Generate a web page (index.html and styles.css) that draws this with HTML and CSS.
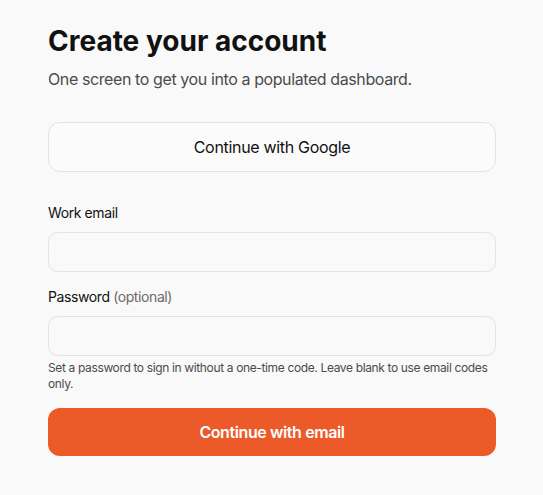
FILE: index.html
```html
<!DOCTYPE html>
<html lang="en">
<head>
<meta charset="utf-8">
<title>Create your account</title>
<link rel="stylesheet" href="styles.css">
</head>
<body>
<main class="page">
  <h1 class="title">Create your account</h1>
  <p class="subtitle">One screen to get you into a populated dashboard.</p>
  <button class="btn-google" type="button">Continue with Google</button>
  <form class="form">
    <label class="label" for="email">Work email</label>
    <input class="input" id="email" type="email">
    <label class="label label-pw" for="pw">Password <span class="optional">(optional)</span></label>
    <input class="input" id="pw" type="password">
    <p class="help">Set a password to sign in without a one-time code. Leave blank to use email codes only.</p>
    <button class="btn-primary" type="button">Continue with email</button>
  </form>
</main>
</body>
</html>
```

FILE: styles.css
```css
* { box-sizing: border-box; }
html, body { margin: 0; padding: 0; background: #f9f9f9; }
body { font-family: Inter, "Noto Sans", sans-serif; color: #111; letter-spacing: -0.025em; }
.page { width: 448px; margin: 0 0 0 48px; padding-top: 24px; display: flex; flex-direction: column; }
.title { margin: 0; font-size: 28px; line-height: 34px; font-weight: 700; letter-spacing: 0; color: #111; }
.subtitle { margin: 9px 0 0; font-size: 16px; line-height: 24px; color: #4b4b4b; }
.btn-google { margin-top: 31px; height: 50px; width: 100%; border: 1px solid #e3e3e3; border-radius: 12px; background: #fbfbfb; font-family: inherit; letter-spacing: -0.02em; font-size: 16px; font-weight: 400; color: #111; }
.form { display: flex; flex-direction: column; margin-top: 31px; }
.label { font-size: 14px; line-height: 20px; font-weight: 400; color: #111; }
.label-pw { margin-top: 15px; }
.optional { font-weight: 400; color: #6b6b6b; }
.input { margin-top: 9px; height: 40px; width: 100%; border: 1px solid #e3e3e3; border-radius: 10px; background: #f9f9f9; font-family: inherit; font-size: 14px; }
.help { margin: 4px 0 0; font-size: 12px; line-height: 16px; color: #4b4b4b; letter-spacing: -0.03em; }
.btn-primary { margin-top: 16px; height: 48px; width: 100%; border: none; border-radius: 12px; background: #ec5a29; color: #fff; font-family: inherit; letter-spacing: -0.025em; font-size: 16px; font-weight: 600; }
```
